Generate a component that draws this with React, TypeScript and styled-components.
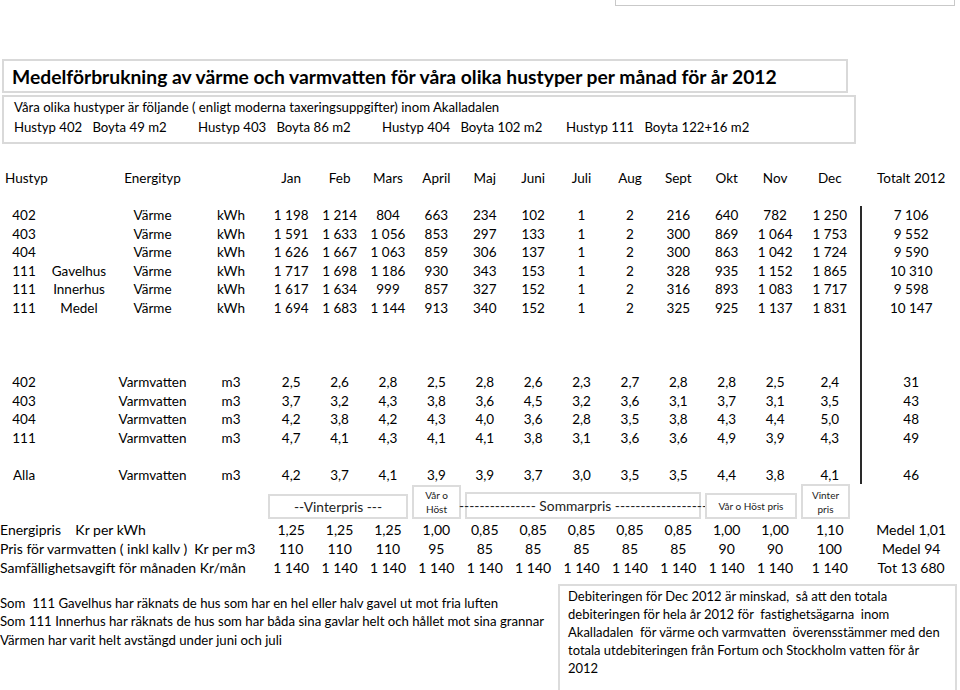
import React from "react";
import styled, { createGlobalStyle } from "styled-components";

const GlobalStyle = createGlobalStyle`
  html, body { margin: 0; padding: 0; background: #fff; }
  body { font-family: Lato, "Open Sans", sans-serif; color: #000; }
`;

const ROW_H = 18.55;
const TEMPLATE = "48px 62px 85px 72px repeat(11, 48.4px) 61px";

const Page = styled.div`
  width: 960px;
  height: 690px;
  overflow: hidden;
  display: flex;
  flex-direction: column;
  font-size: 13.5px;
`;

const TopStub = styled.div`
  margin-left: 615px;
  width: 340px;
  height: 6px;
  box-sizing: border-box;
  border: 1px solid #c9c9c9;
  border-top: none;
`;

const TitleBox = styled.div`
  margin: 53px 0 0 2px;
  width: 846px;
  height: 34px;
  box-sizing: border-box;
  border: 2px solid #d9d9d9;
  display: flex;
  align-items: center;
  padding-left: 8px;
  font-size: 19.3px;
  font-weight: 700;
  white-space: nowrap;
`;

const SubBox = styled.div`
  margin: 2px 0 0 2px;
  width: 854px;
  height: 49px;
  box-sizing: border-box;
  border: 2px solid #d9d9d9;
  padding: 1px 0 0 10px;
  font-size: 13.2px;
  line-height: 19.5px;
  white-space: nowrap;
`;

const HouseLine = styled.div`
  display: flex;
`;

const HouseItem = styled.span`
  width: 184px;
  white-space: pre;
`;

const HeaderRow = styled.div`
  margin-top: 24.7px;
  display: grid;
  grid-template-columns: ${TEMPLATE} 1fr;
  height: ${ROW_H}px;
  align-items: center;
`;

const Blank = styled.div`
  height: ${ROW_H}px;
`;

const Body = styled.div`
  display: flex;
`;

const LeftRows = styled.div`
  width: 860.4px;
  display: flex;
  flex-direction: column;
`;

const Row = styled.div`
  display: grid;
  grid-template-columns: ${TEMPLATE};
  height: ${ROW_H}px;
  align-items: center;
`;

const Cell = styled.div<{ $align?: "left" | "center" }>`
  text-align: ${(p) => p.$align ?? "center"};
  white-space: pre;
  padding-left: ${(p) => (p.$align === "left" ? "5px" : "0")};
`;

const TotalsCol = styled.div`
  flex: 1;
  border-left: 2px solid #2a2a2a;
  display: flex;
  flex-direction: column;
`;

const TotalCell = styled.div`
  height: ${ROW_H}px;
  display: flex;
  align-items: center;
  justify-content: center;
  white-space: pre;
`;

const BoxRow = styled.div`
  height: 36.7px;
  display: flex;
  align-items: flex-end;
  gap: 4px;
  padding-left: 268px;
  box-sizing: border-box;
`;

const PriceBox = styled.div<{ $w: number; $h: number; $small?: boolean }>`
  width: ${(p) => p.$w}px;
  height: ${(p) => p.$h}px;
  margin-bottom: 1.5px;
  box-sizing: border-box;
  border: 2px solid #dcdcdc;
  display: flex;
  align-items: center;
  justify-content: center;
  text-align: center;
  white-space: pre;
  color: #222;
  font-size: ${(p) => (p.$small ? "10px" : "13.8px")};
  line-height: ${(p) => (p.$small ? "14px" : "16px")};
`;

const PriceRow = styled.div`
  display: grid;
  grid-template-columns: 267px repeat(11, 48.4px) 61px 1fr;
  height: 18.6px;
  align-items: center;
  font-size: 14px;
`;

const PriceLabel = styled.div`
  white-space: pre;
`;

const PriceTotal = styled.div`
  padding-left: 2px;
  text-align: center;
  white-space: pre;
`;

const Bottom = styled.div`
  margin-top: 7.5px;
  display: flex;
  flex: 1;
`;

const Notes = styled.div`
  width: 558px;
  padding-top: 10px;
  line-height: 18.5px;
  font-size: 13.2px;
`;

const NoteLine = styled.div`
  white-space: pre;
`;

const InfoBox = styled.div`
  width: 399px;
  box-sizing: border-box;
  border: 2px solid #dcdcdc;
  border-bottom: none;
  padding: 1px 0 0 8px;
  font-size: 13px;
  line-height: 18.1px;
`;

const months = ["Jan", "Feb", "Mars", "April", "Maj", "Juni", "Juli", "Aug", "Sept", "Okt", "Nov", "Dec"];

type DataRow = { h: string; sub: string; e: string; u: string; v: string[]; t: string };

const heat: DataRow[] = [
  { h: "402", sub: "", e: "Värme", u: "kWh", v: ["1 198", "1 214", "804", "663", "234", "102", "1", "2", "216", "640", "782", "1 250"], t: "7 106" },
  { h: "403", sub: "", e: "Värme", u: "kWh", v: ["1 591", "1 633", "1 056", "853", "297", "133", "1", "2", "300", "869", "1 064", "1 753"], t: "9 552" },
  { h: "404", sub: "", e: "Värme", u: "kWh", v: ["1 626", "1 667", "1 063", "859", "306", "137", "1", "2", "300", "863", "1 042", "1 724"], t: "9 590" },
  { h: "111", sub: "Gavelhus", e: "Värme", u: "kWh", v: ["1 717", "1 698", "1 186", "930", "343", "153", "1", "2", "328", "935", "1 152", "1 865"], t: "10 310" },
  { h: "111", sub: "Innerhus", e: "Värme", u: "kWh", v: ["1 617", "1 634", "999", "857", "327", "152", "1", "2", "316", "893", "1 083", "1 717"], t: "9 598" },
  { h: "111", sub: "Medel", e: "Värme", u: "kWh", v: ["1 694", "1 683", "1 144", "913", "340", "152", "1", "2", "325", "925", "1 137", "1 831"], t: "10 147" },
];

const water: DataRow[] = [
  { h: "402", sub: "", e: "Varmvatten", u: "m3", v: ["2,5", "2,6", "2,8", "2,5", "2,8", "2,6", "2,3", "2,7", "2,8", "2,8", "2,5", "2,4"], t: "31" },
  { h: "403", sub: "", e: "Varmvatten", u: "m3", v: ["3,7", "3,2", "4,3", "3,8", "3,6", "4,5", "3,2", "3,6", "3,1", "3,7", "3,1", "3,5"], t: "43" },
  { h: "404", sub: "", e: "Varmvatten", u: "m3", v: ["4,2", "3,8", "4,2", "4,3", "4,0", "3,6", "2,8", "3,5", "3,8", "4,3", "4,4", "5,0"], t: "48" },
  { h: "111", sub: "", e: "Varmvatten", u: "m3", v: ["4,7", "4,1", "4,3", "4,1", "4,1", "3,8", "3,1", "3,6", "3,6", "4,9", "3,9", "4,3"], t: "49" },
];

const all: DataRow = { h: "Alla", sub: "", e: "Varmvatten", u: "m3", v: ["4,2", "3,7", "4,1", "3,9", "3,9", "3,7", "3,0", "3,5", "3,5", "4,4", "3,8", "4,1"], t: "46" };

type Entry = DataRow | null;
const bodyRows: Entry[] = [...heat, null, null, null, ...water, null, all];

const prices = [
  { label: "Energipris    Kr per kWh", v: ["1,25", "1,25", "1,25", "1,00", "0,85", "0,85", "0,85", "0,85", "0,85", "1,00", "1,00", "1,10"], t: "Medel 1,01" },
  { label: "Pris för varmvatten ( inkl kallv )  Kr per m3", v: ["110", "110", "110", "95", "85", "85", "85", "85", "85", "90", "90", "100"], t: "Medel 94" },
  { label: "Samfällighetsavgift för månaden Kr/mån", v: Array(12).fill("1 140"), t: "Tot 13 680" },
];

const houses = ["Hustyp 402   Boyta 49 m2", "Hustyp 403   Boyta 86 m2", "Hustyp 404   Boyta 102 m2", "Hustyp 111   Boyta 122+16 m2"];

const infoLines = [
  "Debiteringen för Dec 2012 är minskad,  så att den totala",
  "debiteringen för hela år 2012 för  fastighetsägarna  inom",
  "Akalladalen  för värme och varmvatten  överensstämmer med den",
  "totala utdebiteringen från Fortum och Stockholm vatten för år",
  "2012",
];

export default function App() {
  return (
    <>
      <GlobalStyle />
      <Page>
        <TopStub />
        <TitleBox>Medelförbrukning av värme och varmvatten för våra olika hustyper per månad för år 2012</TitleBox>
        <SubBox>
          <div>Våra olika hustyper är följande ( enligt moderna taxeringsuppgifter) inom Akalladalen</div>
          <HouseLine>
            {houses.map((h) => (
              <HouseItem key={h}>{h}</HouseItem>
            ))}
          </HouseLine>
        </SubBox>

        <HeaderRow>
          <Cell $align="left">Hustyp</Cell>
          <Cell />
          <Cell>Energityp</Cell>
          <Cell />
          {months.map((m) => (
            <Cell key={m}>{m}</Cell>
          ))}
          <PriceTotal>Totalt 2012</PriceTotal>
        </HeaderRow>
        <Blank />

        <Body>
          <LeftRows>
            {bodyRows.map((r, i) =>
              r ? (
                <Row key={i}>
                  <Cell>{r.h}</Cell>
                  <Cell>{r.sub}</Cell>
                  <Cell>{r.e}</Cell>
                  <Cell>{r.u}</Cell>
                  {r.v.map((v, j) => (
                    <Cell key={j}>{v}</Cell>
                  ))}
                </Row>
              ) : (
                <Blank key={i} />
              )
            )}
          </LeftRows>
          <TotalsCol>
            {bodyRows.map((r, i) => (
              <TotalCell key={i}>{r ? r.t : ""}</TotalCell>
            ))}
          </TotalsCol>
        </Body>

        <BoxRow>
          <PriceBox $w={140} $h={25}>--Vinterpris ---</PriceBox>
          <PriceBox $w={49} $h={34} $small>{"Vår o\nHöst"}</PriceBox>
          <PriceBox $w={236} $h={27}>--------------- Sommarpris ------------------</PriceBox>
          <PriceBox $w={92} $h={26} $small>Vår o Höst pris</PriceBox>
          <PriceBox $w={49} $h={35} $small>{"Vinter\npris"}</PriceBox>
        </BoxRow>

        {prices.map((p) => (
          <PriceRow key={p.label}>
            <PriceLabel>{p.label}</PriceLabel>
            {p.v.map((v, j) => (
              <Cell key={j}>{v}</Cell>
            ))}
            <PriceTotal>{p.t}</PriceTotal>
          </PriceRow>
        ))}

        <Bottom>
          <Notes>
            <NoteLine>Som  111 Gavelhus har räknats de hus som har en hel eller halv gavel ut mot fria luften</NoteLine>
            <NoteLine>Som 111 Innerhus har räknats de hus som har båda sina gavlar helt och hållet mot sina grannar</NoteLine>
            <NoteLine>Värmen har varit helt avstängd under juni och juli</NoteLine>
          </Notes>
          <InfoBox>
            {infoLines.map((l) => (
              <NoteLine key={l}>{l}</NoteLine>
            ))}
          </InfoBox>
        </Bottom>
      </Page>
    </>
  );
}
